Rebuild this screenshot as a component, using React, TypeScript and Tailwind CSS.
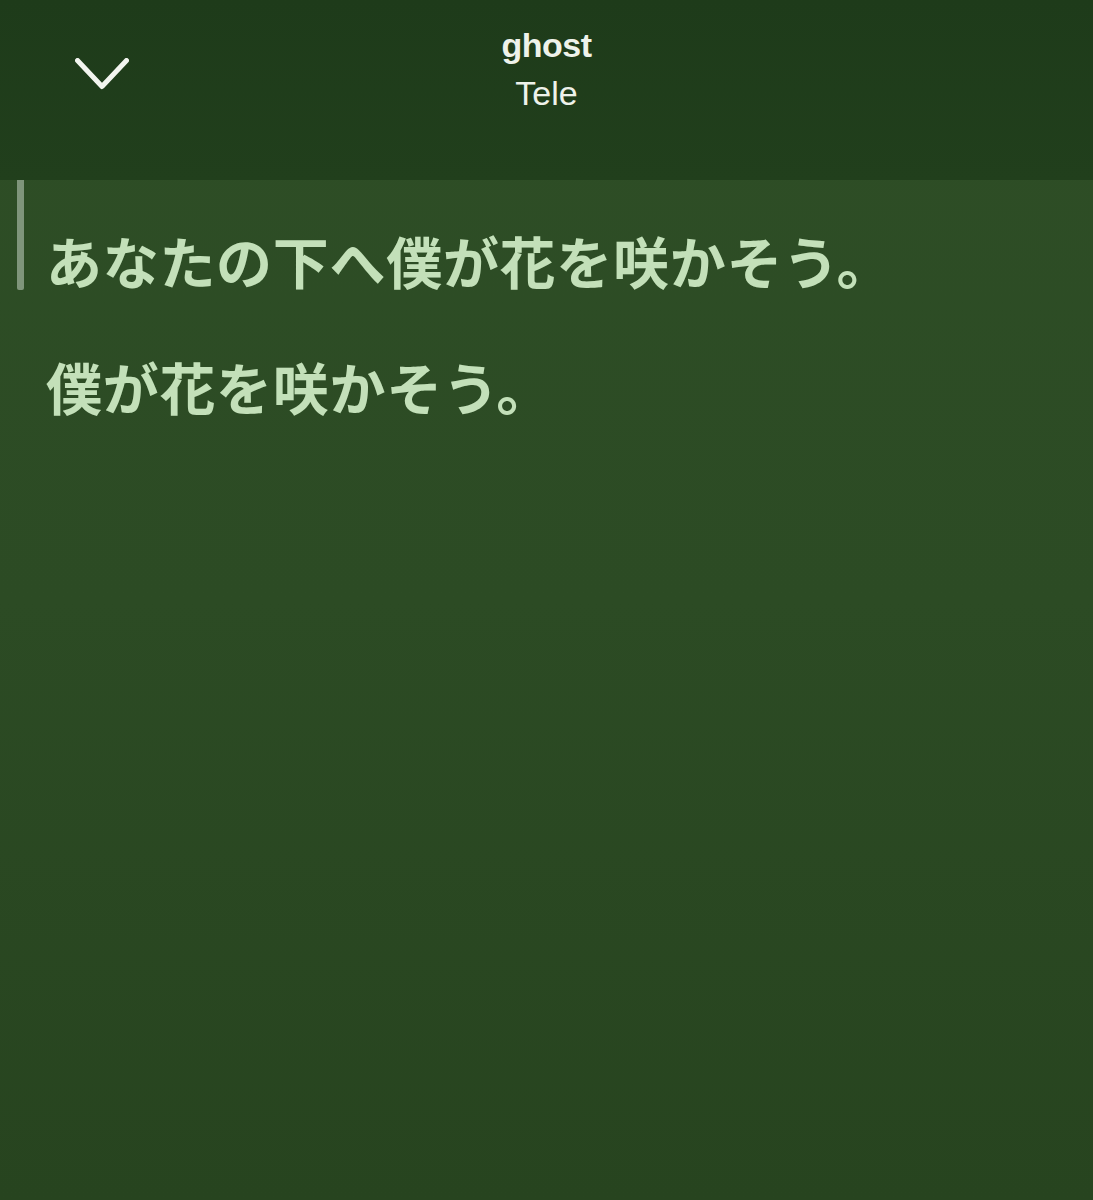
import React from "react";

export default function App() {
  return (
    <div className="w-[1093px] h-[1200px] overflow-hidden flex flex-col bg-[linear-gradient(to_bottom,#2e4e26_0%,#2c4b24_50%,#27441f_100%)]" style={{ fontFamily: '"Liberation Sans", "Noto Sans CJK JP", sans-serif' }}>
      <header className="h-[180px] shrink-0 bg-[linear-gradient(to_bottom,#1e3b1a,#213f1c)] relative flex flex-col items-center pt-[24px]">
        <div className="absolute left-[75px] top-[58px]">
          <svg width="54" height="32" viewBox="0 0 54 32" fill="none">
            <path d="M2.5 2.5 L27 28.5 L51.5 2.5" stroke="#f2f5ef" strokeWidth="5" strokeLinecap="round" strokeLinejoin="round" />
          </svg>
        </div>
        <div className="text-[34px] leading-[42px] font-bold text-[#eef2ea] tracking-[-0.5px]">ghost</div>
        <div className="text-[34px] leading-[42px] text-[#eef2ea] mt-[6px]">Tele</div>
      </header>
      <main className="flex" style={{ fontFamily: '"Noto Sans CJK JP", sans-serif' }}>
        <div className="w-[7px] h-[110px] ml-[17px] bg-[#7f957b] rounded-b-[2px] shrink-0" />
        <div className="ml-[22px] flex flex-col text-[#c3e0b9] font-bold text-[56px] tracking-[0.7px]">
          <div className="leading-[80px] mt-[40px]">あなたの下へ僕が花を咲かそう。</div>
          <div className="leading-[80px] mt-[46px]">僕が花を咲かそう。</div>
        </div>
      </main>
    </div>
  );
}
